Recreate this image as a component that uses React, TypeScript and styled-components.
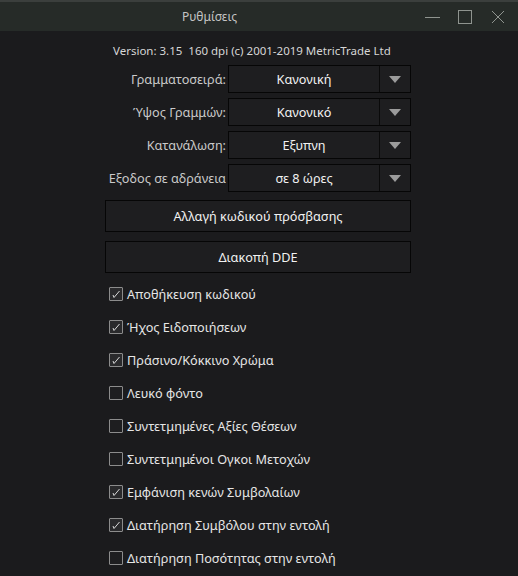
import React from "react";
import styled, { createGlobalStyle } from "styled-components";

const Global = createGlobalStyle`
  html, body { margin: 0; padding: 0; background: #1b1b1d; }
  body { font-family: "Noto Sans", "Open Sans", sans-serif; }
  * { box-sizing: border-box; }
`;

const Window = styled.div`
  width: 518px;
  height: 576px;
  background: #1b1b1d;
  display: flex;
  flex-direction: column;
  overflow: hidden;
`;

const TitleBar = styled.div`
  height: 31px;
  flex: none;
  background: #262b28;
  border-top: 2px solid #3b3f3d;
  display: flex;
  align-items: center;
`;

const Title = styled.div`
  flex: 1;
  text-align: center;
  color: #c4c4c4;
  font-size: 12px;
  padding-left: 4px;
`;

const WinButtons = styled.div`
  display: flex;
  align-items: center;
  padding-right: 4px;
`;

const WinBtn = styled.div`
  width: 33px;
  height: 29px;
  display: flex;
  align-items: center;
  justify-content: center;
`;

const Body = styled.div`
  display: flex;
  flex-direction: column;
  align-items: flex-start;
  padding-top: 11px;
  padding-left: 105px;
`;

const Version = styled.div`
  color: #d6d6d6;
  font-size: 11.5px;
  height: 17px;
  line-height: 17px;
  margin-left: 8px;
`;

const Form = styled.div`
  width: 306px;
  margin-top: 6px;
  display: flex;
  flex-direction: column;
`;

const Row = styled.div`
  display: grid;
  grid-template-columns: 123px 183px;
  height: 28px;
  align-items: center;
  margin-bottom: 5px;
`;

const Label = styled.div`
  color: #cacaca;
  font-size: 12.7px;
  text-align: right;
  padding-right: 2px;
  white-space: nowrap;
  direction: rtl;
`;

const LabelText = styled.span`
  direction: ltr;
  unicode-bidi: embed;
`;

const Combo = styled.div`
  height: 28px;
  border: 1px solid #060606;
  background: #1e1e20;
  display: flex;
`;

const ComboText = styled.div`
  flex: 1;
  color: #f2f2f2;
  font-size: 12.7px;
  display: flex;
  align-items: center;
  justify-content: center;
`;

const ComboArrow = styled.div`
  width: 31px;
  border-left: 1px solid #0a0a0a;
  display: flex;
  align-items: center;
  justify-content: center;
`;

const Button = styled.div<{ $mt: number }>`
  height: 32px;
  margin-top: ${(p) => p.$mt}px;
  border: 1px solid #060606;
  background: #1e1e20;
  color: #f2f2f2;
  font-size: 12.7px;
  display: flex;
  align-items: center;
  justify-content: center;
`;

const Checks = styled.div`
  display: flex;
  flex-direction: column;
  width: 310px;
  margin-top: 4px;
  padding-left: 4px;
`;

const CheckRow = styled.div`
  height: 33px;
  display: flex;
  align-items: center;
  gap: 4px;
`;

const Box = styled.div<{ $on: boolean }>`
  width: 14px;
  height: 14px;
  border: 1px solid #8c8c8c;
  background: ${(p) => (p.$on ? "#2a2a2c" : "#1e1e20")};
  border-radius: 1px;
  display: flex;
  align-items: center;
  justify-content: center;
`;

const CheckText = styled.div`
  color: #e6e6e6;
  font-size: 12.7px;
  white-space: nowrap;
`;

const Arrow = () => (
  <svg width="12" height="7" viewBox="0 0 12 7">
    <path d="M0 0 H12 L6 7 Z" fill="#9b9b9b" />
  </svg>
);

const Tick = () => (
  <svg width="10" height="10" viewBox="0 0 10 10">
    <path d="M2 6 L3 8.5 L8.5 2" fill="none" stroke="#d8d8d8" strokeWidth="1" />
  </svg>
);

const combos = [
  ["Γραμματοσειρά:", "Κανονική"],
  ["Ύψος Γραμμών:", "Κανονικό"],
  ["Κατανάλωση:", "Εξυπνη"],
  ["Εξοδος σε αδράνεια", "σε 8 ώρες"],
];

const checks: [string, boolean][] = [
  ["Αποθήκευση κωδικού", true],
  ["Ήχος Ειδοποιήσεων", true],
  ["Πράσινο/Κόκκινο Χρώμα", true],
  ["Λευκό φόντο", false],
  ["Συντετμημένες Αξίες Θέσεων", false],
  ["Συντετμημένοι Ογκοι Μετοχών", false],
  ["Εμφάνιση κενών Συμβολαίων", true],
  ["Διατήρηση Συμβόλου στην εντολή", true],
  ["Διατήρηση Ποσότητας στην εντολή", false],
];

export default function App() {
  return (
    <Window>
      <Global />
      <TitleBar>
        <Title>Ρυθμίσεις</Title>
        <WinButtons>
          <WinBtn>
            <svg width="16" height="16" viewBox="0 0 16 16">
              <path d="M1 8.5 H16" stroke="#8f948f" strokeWidth="1" />
            </svg>
          </WinBtn>
          <WinBtn>
            <svg width="16" height="16" viewBox="0 0 16 16">
              <rect x="1.5" y="1.5" width="13" height="13" fill="none" stroke="#8f948f" strokeWidth="1" />
            </svg>
          </WinBtn>
          <WinBtn>
            <svg width="16" height="16" viewBox="0 0 16 16">
              <path d="M2 2 L14 14 M14 2 L2 14" stroke="#8f948f" strokeWidth="1" />
            </svg>
          </WinBtn>
        </WinButtons>
      </TitleBar>
      <Body>
        <Version>Version: 3.15&nbsp; 160 dpi (c) 2001-2019 MetricTrade Ltd</Version>
        <Form>
          {combos.map(([l, v]) => (
            <Row key={l}>
              <Label>
                <LabelText>{l}</LabelText>
              </Label>
              <Combo>
                <ComboText>{v}</ComboText>
                <ComboArrow>
                  <Arrow />
                </ComboArrow>
              </Combo>
            </Row>
          ))}
          <Button $mt={3}>Αλλαγή κωδικού πρόσβασης</Button>
          <Button $mt={9}>Διακοπή DDE</Button>
        </Form>
        <Checks>
          {checks.map(([t, on]) => (
            <CheckRow key={t}>
              <Box $on={on}>{on && <Tick />}</Box>
              <CheckText>{t}</CheckText>
            </CheckRow>
          ))}
        </Checks>
      </Body>
    </Window>
  );
}
